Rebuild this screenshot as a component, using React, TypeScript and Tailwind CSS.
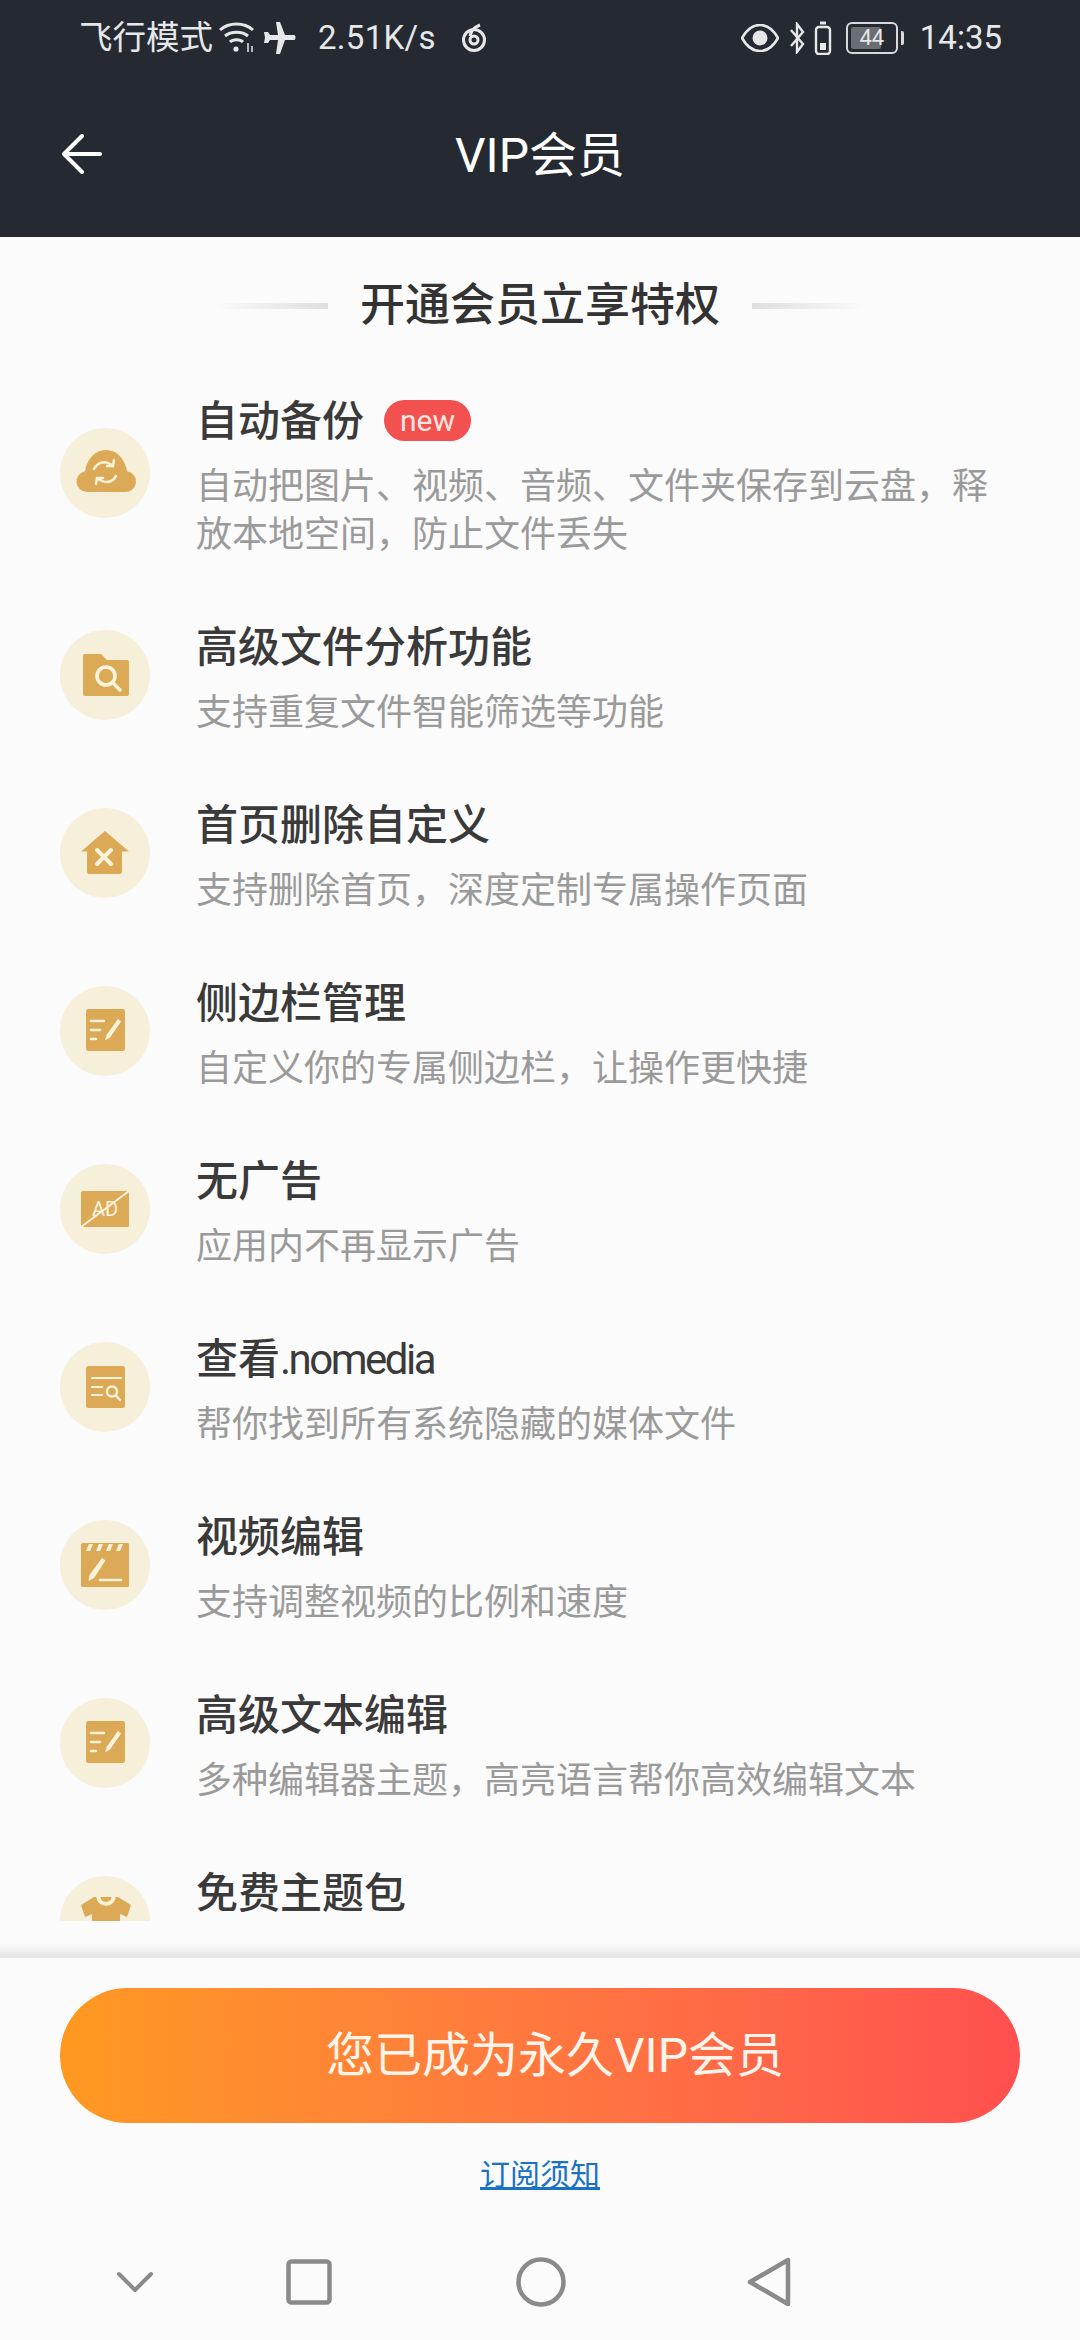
const FONT = "font-['Roboto','Noto_Sans_CJK_SC',sans-serif]";

const GOLD = "#dcaa57";
const CREAM = "#fbf3da";

function CloudIcon() {
  return (
    <>
      <path d="M27 64a10.500 10.500 0 0 1-2-20.800C27 31 35 22 46 22s19 9 21 21.200A10.500 10.500 0 0 1 64 64H27Z" fill={GOLD} />
      <path d="M34 41c3-6 9-8 14-6l4 2m2-5-1 6-6 0M56 48c-3 6-9 7-14 5l-4-2m-2 5 1-6 6 0" fill="none" stroke={CREAM} strokeWidth="2.400" strokeLinecap="round" />
    </>
  );
}

function FolderIcon() {
  return (
    <>
      <path d="M23 26a2 2 0 0 1 2-2h16l6 6h20a2 2 0 0 1 2 2v32a2 2 0 0 1-2 2H25a2 2 0 0 1-2-2V26Z" fill={GOLD} />
      <circle cx="46" cy="46" r="9" fill="none" stroke={CREAM} strokeWidth="3.600" />
      <path d="M52.500 52.500 60 60" stroke={CREAM} strokeWidth="3.600" strokeLinecap="round" />
    </>
  );
}

function HouseIcon() {
  return (
    <>
      <path d="M45 23 69 43.500h-7V64a2 2 0 0 1-2 2H29a2 2 0 0 1-2-2V43.500h-6L45 23Z" fill={GOLD} />
      <path d="M37 42 51 56M51 42 37 56" stroke={CREAM} strokeWidth="4" strokeLinecap="round" />
    </>
  );
}

function NoteIcon() {
  return (
    <>
      <rect x="26" y="23" width="39" height="42" rx="2.500" fill={GOLD} />
      <path d="M31 35h13M31 44h9M31 53h5" stroke={CREAM} strokeWidth="2.600" strokeLinecap="round" />
      <path d="M58 33 61 35.500 50 51.500 45 54.500 46.500 49Z" fill={CREAM} />
    </>
  );
}

function AdIcon() {
  return (
    <>
      <rect x="21" y="27" width="48" height="36" rx="1.500" fill={GOLD} />
      <text x="45" y="52" textAnchor="middle" fontSize="20" fontFamily="Roboto, sans-serif" fill={CREAM}>AD</text>
      <path d="M21 63 69 27" stroke={CREAM} strokeWidth="2" />
    </>
  );
}

function ListSearchIcon() {
  return (
    <>
      <rect x="26" y="24" width="39" height="42" rx="2.500" fill={GOLD} />
      <path d="M32 36h29M32 45h10M32 53h10" stroke={CREAM} strokeWidth="2" strokeLinecap="round" />
      <circle cx="52" cy="49.500" r="5" fill="none" stroke={CREAM} strokeWidth="2.400" />
      <path d="M56 53.500 60 58" stroke={CREAM} strokeWidth="2.400" strokeLinecap="round" />
    </>
  );
}

function VideoIcon() {
  return (
    <>
      <rect x="21" y="23" width="48" height="44" rx="1.500" fill={GOLD} />
      <path d="M29 24h4l-3 7h-4ZM39 24h4l-3 7h-4ZM49 24h4l-3 7h-4ZM59 24h4l-3 7h-4Z" fill={CREAM} />
      <path d="M42 38 45.500 40.500 34 58 28.500 61 29.500 55Z" fill={CREAM} />
      <path d="M40 60h21" stroke={CREAM} strokeWidth="2.600" strokeLinecap="round" />
    </>
  );
}

function ShirtIcon() {
  return (
    <>
      <path d="M34 21h24l13 8-4 12-7-3v10H32V38l-7 3-4-12Z" fill={GOLD} />
      <path d="M37 21c0 11 18 11 18 0" fill={CREAM} stroke={CREAM} strokeWidth="1" />
      <path d="M40.500 21c0 6.500 11 6.500 11 0Z" fill={GOLD} />
    </>
  );
}

const PERKS = [
  { title: <span>自动备份</span>, desc: "自动把图片、视频、音频、文件夹保存到云盘\uFF0C释放本地空间\uFF0C防止文件丢失", icon: <CloudIcon />, isNew: true },
  { title: <span>高级文件分析功能</span>, desc: "支持重复文件智能筛选等功能", icon: <FolderIcon /> },
  { title: <span>首页删除自定义</span>, desc: "支持删除首页\uFF0C深度定制专属操作页面", icon: <HouseIcon /> },
  { title: <span>侧边栏管理</span>, desc: "自定义你的专属侧边栏\uFF0C让操作更快捷", icon: <NoteIcon /> },
  { title: <span>无广告</span>, desc: "应用内不再显示广告", icon: <AdIcon /> },
  {
    title: (
      <span>
        查看<span className="font-normal tracking-[-2.5px]">.nomedia</span>
      </span>
    ),
    desc: "帮你找到所有系统隐藏的媒体文件",
    icon: <ListSearchIcon />,
  },
  { title: <span>视频编辑</span>, desc: "支持调整视频的比例和速度", icon: <VideoIcon /> },
  { title: <span>高级文本编辑</span>, desc: "多种编辑器主题\uFF0C高亮语言帮你高效编辑文本", icon: <NoteIcon /> },
  { title: <span>免费主题包</span>, desc: "", icon: <ShirtIcon /> },
];

function StatusBar() {
  return (
    <div className="flex h-[75px] items-center justify-between pl-[79px] pr-[78px] text-[33px] leading-none text-[#e6e7e8]">
      <div className="flex items-center">
        <span className="text-[33.5px]">飞行模式</span>
        <svg className="ml-[5px] h-[34px] w-[38px]" viewBox="0 0 38 34" fill="none" stroke="currentColor" strokeWidth="3">
          <path d="M2 9c9-8 24-8 33 0M7 15c6-5 17-5 23 0M12 21c3-3 10-3 13 0" />
          <circle cx="18" cy="28" r="2.600" fill="currentColor" stroke="none" />
          <path d="M30 22v9M34 25v6" strokeWidth="1.500" />
        </svg>
        <svg className="ml-[6px] h-[34px] w-[34px]" viewBox="0 0 34 34" fill="currentColor">
          <path d="M14 1h4l5 13h9c2 0 2 5 0 5h-9l-5 14h-4l2-14H8l-2 3H2l1-5.500L2 11h4l2 3h8Z" />
        </svg>
        <span className="ml-[22px] tracking-[0.3px]">2.51K/s</span>
        <svg className="ml-[24px] h-[30px] w-[28px]" viewBox="0 0 28 30" fill="none" stroke="currentColor" strokeWidth="3">
          <circle cx="14" cy="17" r="10.500" />
          <circle cx="14" cy="17" r="4" />
          <path d="M10 13C11 8 15 4 20 2" />
        </svg>
      </div>
      <div className="flex items-center">
        <svg className="h-[28px] w-[38px]" viewBox="0 0 38 28">
          <path d="M1 14C6 5 12 1 19 1s13 4 18 13c-5 9-11 13-18 13S6 23 1 14Z" fill="none" stroke="currentColor" strokeWidth="2.600" />
          <circle cx="19" cy="14" r="7.500" fill="currentColor" />
        </svg>
        <svg className="ml-[10px] h-[32px] w-[16px]" viewBox="0 0 16 32" fill="none" stroke="currentColor" strokeWidth="2.400">
          <path d="M2 8 14 22 8 30V2l6 8L2 24" />
        </svg>
        <svg className="ml-[9px] h-[34px] w-[18px]" viewBox="0 0 18 34" fill="none" stroke="currentColor" strokeWidth="2.400">
          <rect x="2" y="6" width="14" height="27" rx="3" />
          <path d="M6 2h6" strokeWidth="3" />
          <rect x="6" y="22" width="6" height="7" fill="currentColor" stroke="none" />
        </svg>
        <div className="relative ml-[14px] flex h-[32px] w-[52px] items-center rounded-[6px] border-[2px] border-[#d8d9da] p-[3px]">
          <div className="h-full w-[30px] rounded-[2px] bg-[#6a6d72]" />
          <span className="absolute inset-0 flex items-center justify-center text-[22px] leading-none">44</span>
        </div>
        <div className="ml-[3px] h-[14px] w-[3px] rounded-r-[2px] bg-[#d8d9da]" />
        <span className="ml-[16px]">14:35</span>
      </div>
    </div>
  );
}

function Header() {
  return (
    <div className="relative flex h-[162px] items-center justify-center">
      <svg className="absolute left-[62px] top-[59px] h-[40px] w-[40px]" viewBox="0 0 40 40" fill="none" stroke="#fff" strokeWidth="4" strokeLinecap="round" strokeLinejoin="round">
        <path d="M20 2 2 20l18 18M2 20h36" />
      </svg>
      <span className="text-[48px] leading-none text-white">VIP会员</span>
    </div>
  );
}

function PerkRow({ perk }: { perk: (typeof PERKS)[number] }) {
  return (
    <div className="flex items-center gap-[46px] py-[27px] pl-[60px] pr-[60px]">
      <div className="h-[90px] w-[90px] shrink-0 rounded-full bg-[#f6efd9]">
        <svg className="h-[90px] w-[90px]" viewBox="0 0 90 90">
          {perk.icon}
        </svg>
      </div>
      <div className="min-w-0 flex-1 pt-[6px]">
        <div className="flex h-[58px] items-center text-[42px] font-medium leading-none text-[#3a3a3a]">
          {perk.title}
          {perk.isNew && (
            <span className="mb-[3px] ml-[20px] flex h-[41px] w-[87px] items-center justify-center rounded-full bg-[#f35050] text-[30px] font-normal leading-none text-[#fbe6e0]">
              new
            </span>
          )}
        </div>
        <p className="mt-[12px] min-h-[48px] text-[36px] leading-[48px] text-[#9a9a9a]">{perk.desc}</p>
      </div>
    </div>
  );
}

export default function App() {
  return (
    <div className={`flex h-[2340px] w-[1080px] flex-col overflow-hidden bg-[#fbfbfb] ${FONT}`}>
      <div className="bg-[#252a32]">
        <StatusBar />
        <Header />
      </div>

      <div className="flex h-[123px] shrink-0 items-center justify-center gap-[32px] pt-[14px]">
        <div className="h-[6px] w-[114px] bg-gradient-to-r from-transparent to-[#dedede]" />
        <h1 className="text-[45px] font-medium leading-none text-[#333333]">开通会员立享特权</h1>
        <div className="h-[6px] w-[114px] bg-gradient-to-l from-transparent to-[#dedede]" />
      </div>

      <div className="min-h-0 flex-1 overflow-hidden">
        {PERKS.map((perk, i) => (
          <PerkRow key={i} perk={perk} />
        ))}
      </div>

      <div className="h-[36px] shrink-0 bg-gradient-to-b from-transparent from-60% to-[#e6e6e6]" />

      <div className="flex shrink-0 flex-col items-center border-t border-[#e8e8e8] pt-[30px]">
        <button className="flex h-[135px] w-[960px] items-center justify-center rounded-full bg-gradient-to-r from-[#ff991f] to-[#ff4f4f] pl-[30px] text-[48px] leading-none text-[#fff5ea]">
          您已成为永久VIP会员
        </button>
        <a className="mt-[36px] text-[30px] leading-[32px] text-[#1a72c4] underline">订阅须知</a>
        <div className="flex h-[149px] w-full items-center pl-[116px] pt-[33px]">
          <svg className="h-[22px] w-[38px]" viewBox="0 0 38 22" fill="none" stroke="#8a8a8a" strokeWidth="4" strokeLinecap="round" strokeLinejoin="round">
            <path d="M3 3l16 16L35 3" />
          </svg>
          <svg className="ml-[132px] h-[46px] w-[46px]" viewBox="0 0 46 46" fill="none" stroke="#8a8a8a" strokeWidth="4.500" strokeLinejoin="round">
            <rect x="2.500" y="2.500" width="41" height="41" rx="3" />
          </svg>
          <svg className="ml-[184px] h-[50px] w-[50px]" viewBox="0 0 50 50" fill="none" stroke="#8a8a8a" strokeWidth="4.500">
            <circle cx="25" cy="25" r="22.500" />
          </svg>
          <svg className="ml-[181px] h-[50px] w-[44px]" viewBox="0 0 44 50" fill="none" stroke="#8a8a8a" strokeWidth="4.500" strokeLinejoin="round">
            <path d="M41 3v44L3 25Z" />
          </svg>
        </div>
      </div>
    </div>
  );
}
